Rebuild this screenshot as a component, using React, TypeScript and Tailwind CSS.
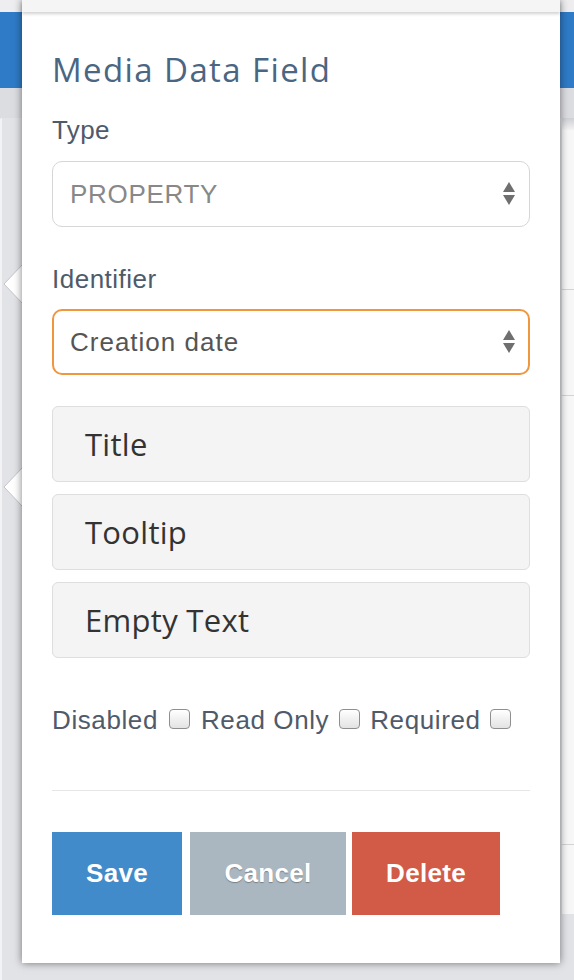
import React from "react";

const sans = { fontFamily: '"Liberation Sans", Arial, sans-serif' };
const open = { fontFamily: '"Open Sans", sans-serif' };

function SelectArrows() {
  return (
    <svg width="14" height="26" viewBox="0 0 14 26" className="shrink-0">
      <polygon points="7,1 13,11 1,11" fill="#6f6f6f" />
      <polygon points="1,14 13,14 7,24" fill="#6f6f6f" />
    </svg>
  );
}

function Checkbox() {
  return (
    <span className="inline-block w-[21px] h-[20px] rounded-[4px] border border-[#8f8f8f] bg-gradient-to-b from-white to-[#e3e3e3] shadow-[0_1px_0_rgba(255,255,255,0.8)] shrink-0" />
  );
}

function LeftArrow() {
  return (
    <svg width="20" height="40" viewBox="0 0 20 40">
      <polygon points="20,0 1,20 20,40" fill="#ffffff" />
      <polyline points="20,0 1,20 20,40" fill="none" stroke="#c4c4c8" strokeWidth="1" />
    </svg>
  );
}

export default function App() {
  return (
    <div className="relative w-[574px] h-[980px] overflow-hidden bg-[#e2e3e7]" style={sans}>
      {/* background page */}
      <div className="flex flex-col h-full">
        <div className="h-[12px] bg-[#eeeef0]" />
        <div className="h-[76px] bg-[#2f7bc7]" />
        <div className="h-[30px] bg-[#dcdde1]" />
        <div className="flex flex-1">
          <div className="w-[2px] bg-[#f3f3f5] rounded-tl-[3px]" />
          <div className="flex-1" />
          <div className="w-[12px] flex flex-col">
            <div className="h-[12px] bg-gradient-to-b from-[#cfd0d4] to-[#f3f3f4]" />
            <div className="h-[160px] bg-[#f7f7f8] border-b border-[#d4d4d6]" />
            <div className="h-[106px] bg-[#f7f7f8] border-b border-[#d4d4d6]" />
            <div className="h-[449px] bg-[#f7f7f8] border-b border-[#d4d4d6]" />
            <div className="h-[69px] bg-[#f7f7f8]" />
            <div className="flex-1" />
          </div>
        </div>
      </div>

      {/* pointer arrows */}
      <div className="absolute left-[3px] top-[264px]">
        <LeftArrow />
      </div>
      <div className="absolute left-[3px] top-[467px]">
        <LeftArrow />
      </div>

      {/* popover panel */}
      <div className="absolute left-[22px] top-0 w-[538px] h-[963px] bg-white shadow-[0_0_8px_rgba(0,0,0,0.5)] flex flex-col">
        <div className="relative h-[12px] bg-[#f5f5f5] shadow-[0_2px_3px_rgba(0,0,0,0.18)]" />
        <div className="flex flex-col px-[30px] pt-[40px]">
          <h1 className="text-[33px] leading-[36px] text-[#4a6682] font-normal tracking-[1.4px]" style={open}>
            Media Data Field
          </h1>

          <label className="mt-[27px] text-[26px] leading-[30px] text-[#4f5a6a] tracking-[0.4px]">Type</label>
          <div className="mt-[16px] h-[66px] rounded-[10px] border border-[#d6d6d6] flex items-center justify-between pl-[17px] pr-[13px]">
            <span className="text-[26px] text-[#888888] tracking-[0.7px]">PROPERTY</span>
            <SelectArrows />
          </div>

          <label className="mt-[37px] text-[26px] leading-[30px] text-[#4f5a6a] tracking-[0.5px]">Identifier</label>
          <div className="mt-[15px] h-[66px] rounded-[10px] border-2 border-[#f0963f] flex items-center justify-between pl-[16px] pr-[12px]">
            <span className="text-[26px] text-[#555555] tracking-[1px]">Creation date</span>
            <SelectArrows />
          </div>

          <div className="mt-[31px] flex flex-col gap-[12px]">
            {["Title", "Tooltip", "Empty Text"].map((t) => (
              <div
                key={t}
                className="h-[76px] rounded-[6px] border border-[#dedede] bg-[#f4f4f4] flex items-center pl-[32px] text-[31px] text-[#333333] tracking-[0.3px]"
                style={open}
              >
                {t}
              </div>
            ))}
          </div>

          <div className="mt-[47px] h-[30px] flex items-center text-[26px] text-[#4f5a6a] tracking-[0.6px]">
            <span>Disabled</span>
            <span className="ml-[11px]"><Checkbox /></span>
            <span className="ml-[11px]">Read Only</span>
            <span className="ml-[10px]"><Checkbox /></span>
            <span className="ml-[10px]">Required</span>
            <span className="ml-[9px]"><Checkbox /></span>
          </div>

          <div className="mt-[55px] h-px bg-[#e6e6e6]" />

          <div className="mt-[41px] flex">
            <button className="w-[130px] h-[83px] bg-[#418bca] text-white text-[26px] font-bold tracking-[0.3px]">Save</button>
            <button className="ml-[8px] w-[156px] h-[83px] bg-[#abb7c0] text-white text-[26px] font-bold tracking-[0.3px] [text-shadow:0_1px_1px_rgba(0,0,0,0.3)]">Cancel</button>
            <button className="ml-[6px] w-[148px] h-[83px] bg-[#d25b47] text-white text-[26px] font-bold tracking-[0.3px]">Delete</button>
          </div>
        </div>
      </div>
    </div>
  );
}
